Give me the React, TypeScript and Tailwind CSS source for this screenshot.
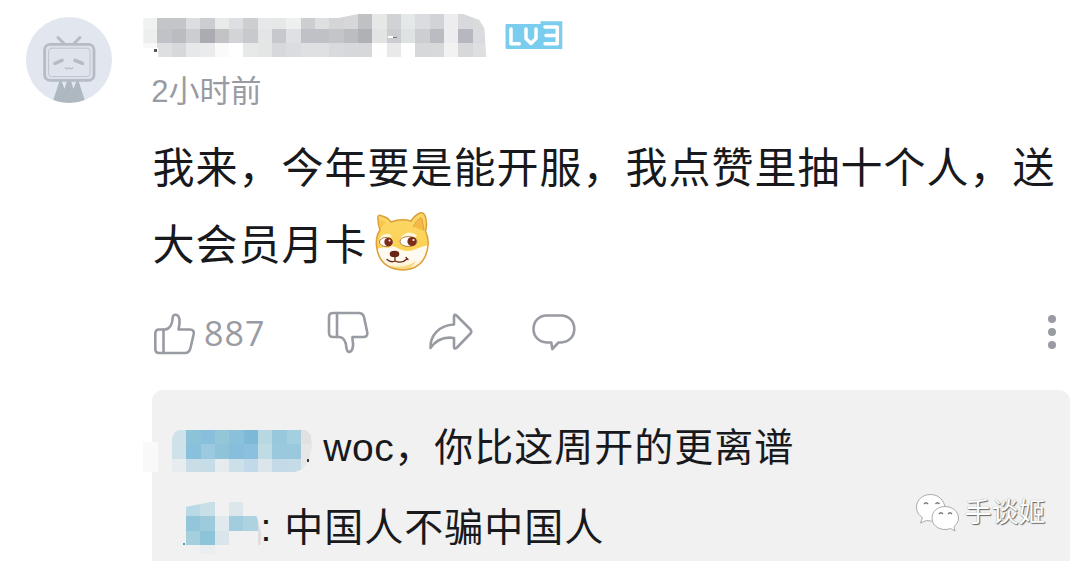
import React from 'react';

interface MosaicProps {
  rows: string[];
  heights: number[];
  cell: number;
  className?: string;
  clip: string;
}

// Pixelated block that hides a user name
const Mosaic: React.FC<MosaicProps> = ({ rows, heights, cell, className, clip }) => {
  const grid = rows.map((row) => row.split(' '));
  const total = heights.reduce((a, b) => a + b, 0);
  const width = grid[0].length * cell;

  return (
    <svg
      width={width}
      height={total}
      viewBox={`0 0 ${width} ${total}`}
      shapeRendering="crispEdges"
      className={className}
      style={{ clipPath: clip }}
    >
      {grid.map((row, r) => {
        const y = heights.slice(0, r).reduce((a, b) => a + b, 0);
        return row.map((color, c) => (
          <rect key={`${r}-${c}`} x={c * cell} y={y} width={cell} height={heights[r]} fill={`#${color}`} />
        ));
      })}
    </svg>
  );
};

const Avatar = () => (
  <svg width="86" height="86" viewBox="0 0 86 86" className="shrink-0">
    <defs>
      <clipPath id="avatar">
        <circle cx="43" cy="43" r="43" />
      </clipPath>
    </defs>
    <circle cx="43" cy="43" r="43" fill="#e1e6ef" />
    <g clipPath="url(#avatar)">
      <path d="M26 87 L33.5 64 H52.5 L60 87 Z" fill="#aeb8c0" />
      <path d="M35.5 64 L38.5 72 L41 64 Z M45 64 L47.5 72 L50.5 64 Z" fill="#e1e6ef" />
    </g>
    <g fill="none" stroke="#b5bcc4" strokeLinecap="round" strokeLinejoin="round">
      <path d="M32 20.5 L38 26.5 M54 20.5 L48 26.5" strokeWidth="3" />
      <rect x="18.6" y="27.4" width="49.4" height="36" rx="5.5" strokeWidth="2.8" fill="#dde2ea" />
      <rect x="22.6" y="31.2" width="41.4" height="28.4" rx="3" strokeWidth="0.8" fill="#dfe4ec" />
      <path d="M29 46.3 L36 43.3 M49 43.3 L56.5 46.3" strokeWidth="3.6" />
      <path d="M39.3 50.5 Q41 53.3 43 50.7 Q45 53.3 46.8 50.5" strokeWidth="1.2" />
    </g>
  </svg>
);

const LevelBadge = () => (
  <svg width="58" height="30" viewBox="0 0 58 30">
    <path d="M1.5 3 H35.5 V0.3 H57.3 V28 H1.5 Q0.5 28 0.5 27 V4 Q0.5 3 1.5 3 Z" fill="#7bcdef" />
    <g fill="none" stroke="#fff" strokeWidth="3.5" strokeLinecap="round" strokeLinejoin="round">
      <path d="M6 8 V22.8 H14.3" />
      <path d="M21 8 V17.5 L26 22.5 L31 17.5 V8" />
      <path d="M40 6 H52.3 V22.8 H40 M41 14.5 H52" />
    </g>
  </svg>
);

const Doge = () => (
  <svg width="56" height="62" viewBox="0 0 56 62">
    <defs>
      <linearGradient id="fur" x1="0" y1="0" x2="0" y2="1">
        <stop offset="0" stopColor="#fbd869" />
        <stop offset="0.6" stopColor="#fbd254" />
        <stop offset="1" stopColor="#fde38f" />
      </linearGradient>
      <linearGradient id="muzzle" x1="0" y1="0" x2="0" y2="1">
        <stop offset="0.5" stopColor="#fffaf0" />
        <stop offset="1" stopColor="#fdeab0" />
      </linearGradient>
      <clipPath id="face">
        <path d="M4 9 Q3 2.500 8 5 Q14 6.500 17 11 Q27 7 37 10 Q41 4 46 2 Q50 1 51.500 6 Q53.500 13 51.500 20 Q55 28 54 35 Q51 58 29 59 Q5 58 2.500 35 Q1.500 26 6 19 Q4 14 4 9 Z" />
      </clipPath>
    </defs>
    <g clipPath="url(#face)">
      <rect width="56" height="62" fill="url(#fur)" />
      <path d="M2 39 Q7 35 14 37 Q19 33 25 38 Q34 42 42 38 Q49 35 55 34 L54 62 H0 Z" fill="url(#muzzle)" />
      <path d="M6 27 Q9 22 16 23 L18 26 Q14 25 6 29 Z M27 26 Q34 18 43 24 L41 27 Q34 24 28 29 Z" fill="#fff4d7" />
      <path d="M40 16 Q43 9 48 6 L50 20 Z" fill="#f5b948" />
      <path d="M5 8 L12 11 L6 18 Z" fill="#f8c750" />
      <path d="M16 55 Q31 58 42 50 Q36 60 28 60 Q20 59 16 55 Z" fill="#fbd982" />
    </g>
    <path
      d="M4 9 Q3 2.500 8 5 Q14 6.500 17 11 Q27 7 37 10 Q41 4 46 2 Q50 1 51.500 6 Q53.500 13 51.500 20 Q55 28 54 35 Q51 58 29 59 Q5 58 2.500 35 Q1.500 26 6 19 Q4 14 4 9 Z"
      fill="none"
      stroke="#dc9f3a"
      strokeWidth="1.5"
    />
    <path d="M39 16 Q42 9 47 6.500 M48 8 L50 19" fill="none" stroke="#dda03a" strokeWidth="1" />
    <ellipse cx="12" cy="31" rx="6.500" ry="4.500" fill="#fff" stroke="#a97138" strokeWidth="0.900" />
    <ellipse cx="34.500" cy="30.500" rx="8.500" ry="5" fill="#fff" stroke="#a97138" strokeWidth="0.900" />
    <circle cx="14.500" cy="31" r="4.200" fill="#7c2c17" />
    <circle cx="38" cy="30.500" r="4.600" fill="#7c2c17" />
    <circle cx="15.500" cy="29.500" r="1" fill="#fff" />
    <circle cx="39.500" cy="29" r="1.100" fill="#fff" />
    <ellipse cx="20.500" cy="43" rx="4.800" ry="3.200" fill="#672514" />
    <path d="M21 46 V49.500 M13 48.500 Q17 52 21 50 Q28 53 33 48 M32 46.500 L34 48.500" fill="none" stroke="#672514" strokeWidth="1.300" strokeLinecap="round" />
  </svg>
);

const iconProps = {
  fill: 'none',
  stroke: '#999ba3',
  strokeWidth: 2.6,
  strokeLinejoin: 'round' as const,
  strokeLinecap: 'round' as const,
};

const LikeIcon = () => (
  <svg width="44" height="46" viewBox="0 0 44 46" {...iconProps}>
    <path d="M6 17.500 H12 C17 17 19.500 11.500 19.700 5.500 C20 1.500 25.500 1.500 26.500 7.500 C27 11.500 26 14.500 25.500 17.500 H37 Q41.300 17.500 40.700 22 L37.500 36 Q36.300 41 32 41 H6 Q2.300 41 2.300 37 V22 Q2.300 17.500 6 17.500 Z" />
    <path d="M10.500 17.500 V41" />
  </svg>
);

const DislikeIcon = () => (
  <svg width="44" height="46" viewBox="0 0 44 46" {...iconProps}>
    <path d="M6 2 H31.500 Q36 2 37 6 L40.300 21.500 Q40.700 26 36.500 26 H25.500 C25 29 26.500 31 26 35 C25 42.500 20 42.500 19.500 37 C19 31 16.500 26.500 12.500 26 H6 Q2 26 2 22 V6 Q2 2 6 2 Z" />
    <path d="M10 2 V26" />
  </svg>
);

const ShareIcon = () => (
  <svg width="46" height="40" viewBox="0 0 46 40" {...iconProps}>
    <path d="M26 4.500 Q26 1.500 28.500 3.500 L42.500 17.500 Q44 19.500 42.500 21.500 L29 35.500 Q26 38 26 34.500 V26 C16 24.500 8 28 2.500 36 C2 24 11 13 26 12.500 Z" />
  </svg>
);

const CommentIcon = () => (
  <svg width="46" height="40" viewBox="0 0 46 40" {...iconProps}>
    <path d="M15.500 2.500 H30 C38 2.500 43.300 8.500 43.300 16 C43.300 23.500 38 29 30 29.500 H27.500 L21.300 36 L20.300 29.500 H15.500 C8 29 2.500 23.500 2.500 16 C2.500 8.500 8 2.500 15.500 2.500 Z" />
  </svg>
);

const WechatIcon = () => (
  <svg width="44" height="40" viewBox="0 0 44 40" fill="#fff" stroke="#a0a0a0" strokeWidth="0.900">
    <path d="M15.500 1.500 C7.500 1.500 1.500 7 1.500 14 C1.500 18.500 4 22.500 7.500 24.500 L5.500 30 L11.500 27.500 Q17 29 21 27 C28 24 31 18 29.500 12 C27.500 5.500 22 1.500 15.500 1.500 Z" />
    <path d="M30 13.500 C22.500 13.500 17 18.500 17 25 C17 31.500 22.500 36.500 30 36.500 Q33 36.500 35.500 35.500 L40 38 L39 33.500 C42 31 43.500 28.500 43.500 25 C43.500 18.500 37.500 13.500 30 13.500 Z" />
    <path d="M9 11 Q11 8.500 13 11 M20.500 11 Q22.500 8.500 24.500 11 M24 21 Q26 18.500 28 21 M33 21 Q35 18.500 37 21" fill="none" stroke="#777" strokeWidth="1.400" />
  </svg>
);

export default function App() {
  return (
    <div className="relative h-[561px] w-[1080px] overflow-hidden bg-white font-['Liberation_Sans','Noto_Sans_CJK_SC',sans-serif] text-[#18191c]">
      <div className="flex pl-[26px] pt-[14px]">
        <div className="pt-[3px]">
          <Avatar />
        </div>
        <div className="ml-[31.300px]">
          <div className="flex h-[44px] items-start">
            <Mosaic
              cell={14.33}
              heights={[14.5, 14.3, 14.2]}
              clip="polygon(0 4px, 195px 4px, 215px 0, 320px 0, 336px 6px, 341px 14px, 343px 43px, 15px 43px, 15px 34px, 0 34px)"
              rows={[
                'f0f1f1 c4c5c9 c4c5c8 dcdde0 cccdd1 e8ebea dedfe2 ccced0 e7e8ea e5e8e7 edf0ef cdced0 dedfe1 d4d5d7 d7d7d9 c0c1c5 e6e7e7 d1d2d5 e5e8e8 dbdcdf d2d3d6 ededef d8d9dc dadbdd',
                'edefef c1c2c7 bbbcc2 cccdd1 abacb2 c3c3c6 d3d4d7 c8c9cd e4e5e7 c6c8ce dfe0e3 c0c1c6 c0c1c7 c4c5c8 bcbdc1 b0b1b6 e1e4e3 cccdd0 dfe2e2 ccced1 bbbcc1 ededef b7b8bf dadbde',
                'f8f8f8 dedfe1 d7d8db e7e8ea eaebed fafafa ffffff e7e9e8 e3e6e5 d7d8db dbdcdf dfe0e2 dfe0e2 d9dadd d7d8db d7d8da fefefe e9e9ea ffffff d7d8da d8d9db f2f2f3 d7d8da dedfe1',
              ]}
            />
            <div className="ml-[17.500px] mt-[7px]">
              <LevelBadge />
            </div>
          </div>
          <div className="ml-[8px] mt-[11px] h-[45px] text-[31px] leading-[45px] text-[#999ba3]">2小时前</div>
        </div>
      </div>

      <div className="ml-[152.500px] mt-[16px] h-[154px] whitespace-nowrap text-[42px] leading-[77px] tracking-[1px]">
        <div>我来，今年要是能开服，我点赞里抽十个人，送</div>
        <div className="flex">
          <span>大会员月卡</span>
          <span className="ml-[6.500px] mt-[4px]">
            <Doge />
          </span>
        </div>
      </div>

      <div className="ml-[153px] mr-[24px] mt-[27px] flex h-[46px] items-start text-[#999ba3]">
        <span className="mt-[1px]">
          <LikeIcon />
        </span>
        <span className="ml-[7px] mt-[2px] w-[123px] font-['Open_Sans','Noto_Sans',sans-serif] text-[34px] leading-[40px] tracking-[1px]">887</span>
        <DislikeIcon />
        <span className="ml-[57px] mt-[1px]">
          <ShareIcon />
        </span>
        <span className="ml-[57px] mt-[2px]">
          <CommentIcon />
        </span>
        <div className="ml-auto mt-[4px] flex flex-col gap-[5px]">
          <span className="h-[8px] w-[8px] rounded-full bg-[#999ba3]" />
          <span className="h-[8px] w-[8px] rounded-full bg-[#999ba3]" />
          <span className="h-[8px] w-[8px] rounded-full bg-[#999ba3]" />
        </div>
      </div>

      <div className="ml-[152px] mr-[10px] mt-[33px] h-[190px] rounded-t-[11px] bg-[#f1f1f1] pt-[18px] text-[39px] leading-[80px] tracking-[1px]">
        <div className="flex h-[80px] whitespace-nowrap">
          <Mosaic
            className="ml-[20px] mt-[22px]"
            cell={14.33}
            heights={[14.3, 14.3, 13.9]}
            clip="polygon(0 8px, 3px 2px, 7px 0, 134px 0, 139px 5px, 140px 17px, 137px 30px, 131px 39px, 123px 42px, 0 42px)"
            rows={[
              'cfe2e9 8dc3d9 88bfdc 93c6d6 8ac0da 7db9d6 b7d8e2 98c8dc a4cfdf e1e1e1',
              'cfe2e9 89c1dc 9bc9df 8ec3da 87bedb 8cc1dd bfdbe4 9ac9dd 9ac9dd e6e6e6',
              'e7ecee c8dde6 c6dde7 e6ecee cbe0e8 c1d9e8 dae6eb c4dae8 c5dbe8 e6e7e8',
            ]}
          />
          <span className="ml-[8px]">
            <span className="tracking-[0.500px]">woc</span>，你比这周开的更离谱
          </span>
        </div>
        <div className="flex h-[80px] whitespace-nowrap">
          <Mosaic
            className="ml-[33.500px] mt-[14px]"
            cell={14.33}
            heights={[14.4, 14.3, 14.3, 9]}
            clip="polygon(0 5px, 25px 0, 60px 0, 60px 14px, 71px 14px, 76px 32px, 75px 43px, 60px 43px, 60px 52px, 0 52px)"
            rows={[
              'b9d9e4 c9dfe7 f1f1f1 dbe7eb f1f1f1 f1f1f1',
              '93c6da 9dcbdc e0e9ed a1cddf aed3e0 dfdfdf',
              'a5cfdd 8ec4da d9e5ea f1f1f1 f1f1f1 dedede',
              'f1f1f1 eaeef0 f1f1f1 f1f1f1 f1f1f1 f1f1f1',
            ]}
          />
          <span className="-ml-[11px]">: 中国人不骗中国人</span>
        </div>
      </div>

      {/* stray censor blocks and specks left around the mosaics */}
      <div className="absolute left-[143px] top-[442px] h-[30px] w-[15px] bg-[#f9f9f9]" />
      <div className="absolute left-[307px] top-[459px] h-[3px] w-[2px] bg-[#33363b]" />
      <div className="absolute left-[183px] top-[543px] h-[2px] w-[2px] bg-[#3f9fbe]" />
      <div className="absolute left-[154px] top-[49px] h-[3px] w-[3px] bg-[#55565a]" />
      <div className="absolute left-[388px] top-[36px] h-[2px] w-[5px] bg-white" />
      <div className="absolute left-[393px] top-[37px] h-px w-[4px] bg-[#77787c]" />

      {/* watermark */}
      <div className="absolute left-[915px] top-[493px] flex items-center">
        <WechatIcon />
        <span className="ml-[5.500px] text-[27px] leading-[40px] text-white [text-shadow:1px_1px_1px_#666,0_0_1px_#888]">手谈姬</span>
      </div>
    </div>
  );
}
